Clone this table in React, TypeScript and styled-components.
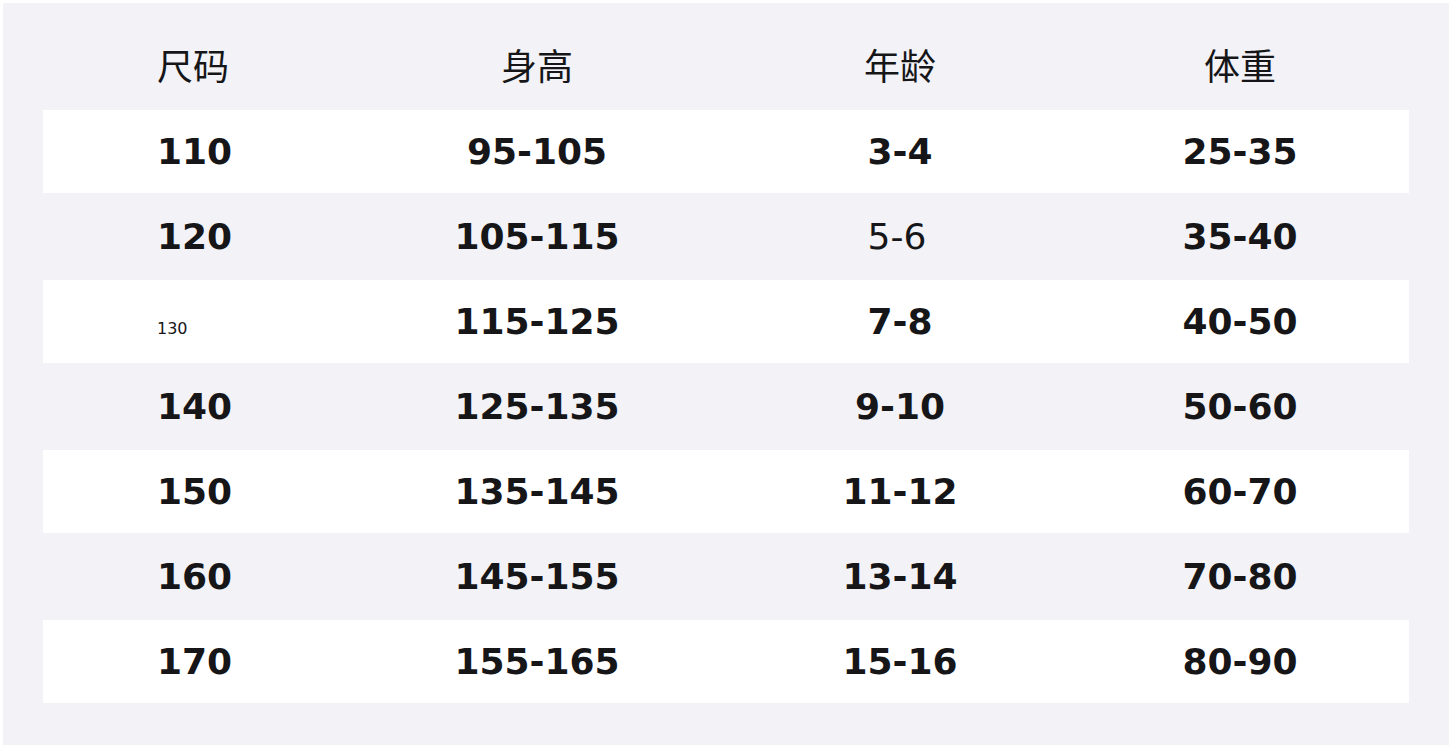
import React from "react";
import styled, { createGlobalStyle } from "styled-components";

const Global = createGlobalStyle`
  html, body { margin: 0; padding: 0; background: #ffffff; }
  body { font-family: "DejaVu Sans", "Noto Sans CJK SC", sans-serif; }
`;

const Frame = styled.div`
  padding: 3px;
`;

const Panel = styled.div`
  background: #f2f2f7;
  padding: 40px;
`;

const Table = styled.div`
  display: flex;
  flex-direction: column;
`;

const Row = styled.div<{ $white?: boolean }>`
  display: grid;
  grid-template-columns: 302px 384px 342px 338px;
  height: 85px;
  box-sizing: border-box;
  align-items: center;
  background: ${(p) => (p.$white ? "#ffffff" : "transparent")};
  border-bottom: 2px solid #f2f2f7;
`;

const HeadRow = styled.div`
  display: grid;
  grid-template-columns: 302px 384px 342px 338px;
  height: 67px;
  box-sizing: border-box;
  align-items: start;
  padding-top: 0;
`;

const HeadCell = styled.div<{ $first?: boolean }>`
  font-family: "Noto Sans CJK SC", sans-serif;
  font-size: 36px;
  line-height: 43px;
  color: #161618;
  text-align: ${(p) => (p.$first ? "left" : "center")};
  padding-left: ${(p) => (p.$first ? "114px" : "0")};
`;

const Cell = styled.div<{ $first?: boolean; $plain?: boolean; $tiny?: boolean }>`
  font-family: "DejaVu Sans", sans-serif;
  font-size: ${(p) => (p.$tiny ? "16px" : "36px")};
  font-weight: ${(p) => (p.$plain || p.$tiny ? 400 : 700)};
  line-height: 1;
  color: #161618;
  text-align: ${(p) => (p.$first ? "left" : "center")};
  padding-left: ${(p) => (p.$first ? "114px" : "0")};
  padding-right: ${(p) => (p.$plain ? "6px" : "0")};
  padding-top: ${(p) => (p.$tiny ? "14px" : "0")};
`;

type R = { size: string; height: string; age: string; weight: string; tiny?: boolean; plainAge?: boolean };

const rows: R[] = [
  { size: "110", height: "95-105", age: "3-4", weight: "25-35" },
  { size: "120", height: "105-115", age: "5-6", weight: "35-40", plainAge: true },
  { size: "130", height: "115-125", age: "7-8", weight: "40-50", tiny: true },
  { size: "140", height: "125-135", age: "9-10", weight: "50-60" },
  { size: "150", height: "135-145", age: "11-12", weight: "60-70" },
  { size: "160", height: "145-155", age: "13-14", weight: "70-80" },
  { size: "170", height: "155-165", age: "15-16", weight: "80-90" },
];

export default function App() {
  return (
    <Frame>
      <Global />
      <Panel>
        <Table>
          <HeadRow>
            <HeadCell $first>尺码</HeadCell>
            <HeadCell>身高</HeadCell>
            <HeadCell>年龄</HeadCell>
            <HeadCell>体重</HeadCell>
          </HeadRow>
          {rows.map((r, i) => (
            <Row key={r.size} $white={i % 2 === 0}>
              <Cell $first $tiny={r.tiny}>{r.size}</Cell>
              <Cell>{r.height}</Cell>
              <Cell $plain={r.plainAge}>{r.age}</Cell>
              <Cell>{r.weight}</Cell>
            </Row>
          ))}
        </Table>
      </Panel>
    </Frame>
  );
}
